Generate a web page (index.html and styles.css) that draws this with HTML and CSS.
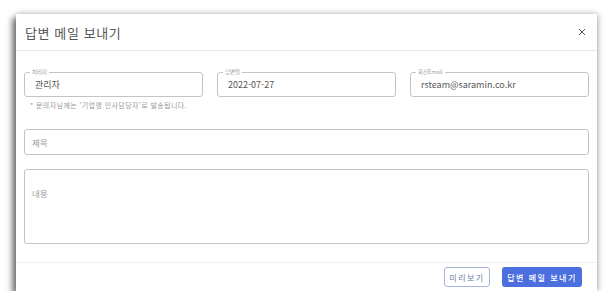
FILE: index.html
```html
<!DOCTYPE html>
<html lang="ko">
<head>
  <meta charset="UTF-8">
  <meta name="viewport" content="width=device-width, initial-scale=1.0">
  <link rel="stylesheet" href="styles.css">
</head>
<body>
  <div class="modal">
    <!-- 헤더 -->
    <div class="modal-header">
      <h2 class="modal-title">답변 메일 보내기</h2>
      <svg class="modal-close" width="8" height="8" viewBox="0 0 8 8">
        <path d="M1 1L7 7M7 1L1 7" stroke="#555" stroke-width="1" fill="none"/>
      </svg>
    </div>

    <div class="modal-body">
      <div class="field-row">
        <div class="field">
          <span class="field-label">처리자</span>
          <span class="field-value">관리자</span>
        </div>
        <div class="field">
          <span class="field-label">답변일</span>
          <span class="field-value">2022-07-27</span>
        </div>
        <div class="field">
          <span class="field-label">회신Email</span>
          <span class="field-value">rsteam@saramin.co.kr</span>
        </div>
      </div>
      <p class="help-text">* 문의자님께는 '기업명 인사담당자'로 발송됩니다.</p>

      <div class="input-box subject">
        <span class="placeholder">제목</span>
      </div>
      <div class="input-box content">
        <span class="placeholder">내용</span>
      </div>
    </div>

    <!-- 버튼 -->
    <div class="modal-footer">
      <button class="btn btn-outline">미리보기</button>
      <button class="btn btn-primary">답변 메일 보내기</button>
    </div>
  </div>
</body>
</html>
```

FILE: styles.css
```css
* {
  margin: 0;
  padding: 0;
  box-sizing: border-box;
}

body {
  font-family: 'Noto Sans CJK KR', 'Noto Sans', sans-serif;
  background-color: #fff;
  color: #444;
  padding: 14px 0 0 16px;
}

.modal {
  width: 581px;
  height: 277px;
  background-color: #fff;
  box-shadow: -4px 4px 6px rgba(0, 0, 0, 0.5), 1px 0 6px rgba(0, 0, 0, 0.3);
  display: flex;
  flex-direction: column;
}

/* 헤더 */
.modal-header {
  height: 37px;
  border-bottom: 1px solid #e9e9e9;
  display: flex;
  align-items: center;
  justify-content: space-between;
  padding: 0 11px 0 9px;
}

.modal-title {
  font-size: 13px;
  font-weight: 400;
  letter-spacing: 0.6px;
  color: #555;
}

.modal-close {
  display: block;
}

/* 본문 */
.modal-body {
  flex: 1;
  padding: 21px 8px 0 8px;
}

.field-row {
  display: grid;
  grid-template-columns: repeat(3, 1fr);
  gap: 14px;
}

.field {
  position: relative;
  height: 25px;
  border: 1px solid #c4c4c4;
  border-radius: 3px;
  display: flex;
  align-items: center;
  padding: 0 10px;
}

.field-label {
  position: absolute;
  top: -5px;
  left: 5px;
  padding: 0 2px;
  background-color: #fff;
  font-size: 5.5px;
  line-height: 8px;
  color: #999;
}

.field-value {
  font-size: 9px;
  color: #555;
}

.help-text {
  margin-top: 3px;
  padding-left: 6px;
  font-size: 7px;
  line-height: 10px;
  letter-spacing: 0.4px;
  color: #999;
}

.input-box {
  border: 1px solid #c4c4c4;
  border-radius: 3px;
  padding: 0 7px;
}

.subject {
  margin-top: 19px;
  height: 26px;
  display: flex;
  align-items: center;
}

.content {
  margin-top: 14px;
  height: 75px;
  padding-top: 8px;
}

.placeholder {
  font-size: 8.5px;
  color: #999;
}

/* 하단 */
.modal-footer {
  height: 29px;
  border-top: 1px solid #f0f0f0;
  display: flex;
  align-items: center;
  justify-content: flex-end;
  gap: 12px;
  padding-right: 15px;
}

.btn {
  height: 20px;
  border-radius: 3px;
  font-family: 'Noto Sans CJK KR', 'Noto Sans', sans-serif;
  font-size: 8px;
  letter-spacing: 1.5px;
  cursor: pointer;
}

.btn-outline {
  width: 46px;
  background-color: #fff;
  border: 1px solid #a9b5dc;
  color: #6c7aa8;
}

.btn-primary {
  width: 80px;
  background-color: #4b6fdf;
  border: none;
  color: #fff;
  font-weight: 500;
  letter-spacing: 1.5px;
}
```
